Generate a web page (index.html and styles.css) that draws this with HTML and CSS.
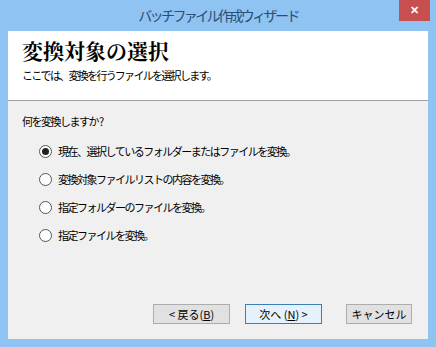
FILE: index.html
```html
<!DOCTYPE html>
<html lang="ja">
<head>
    <meta charset="UTF-8">
    <title>バッチファイル作成ウィザード</title>
    <link rel="stylesheet" href="styles.css">
</head>
<body>
    <div class="window">
        <div class="titlebar">
            <span class="title">バッチファイル作成ウィザード</span>
            <button class="close">&#x2715;</button>
        </div>
        <div class="client">
            <div class="header">
                <h1>変換対象の選択</h1>
                <p>ここでは、変換を行うファイルを選択します。</p>
            </div>
            <div class="body">
                <p class="question">何を変換しますか ?</p>
                <label class="option"><span class="radio checked"></span>現在、選択しているフォルダーまたはファイルを変換。</label>
                <label class="option"><span class="radio"></span>変換対象ファイルリストの内容を変換。</label>
                <label class="option"><span class="radio"></span>指定フォルダーのファイルを変換。</label>
                <label class="option"><span class="radio"></span>指定ファイルを変換。</label>
            </div>
            <div class="buttons">
                <button class="btn">&lt; 戻る(<u>B</u>)</button>
                <button class="btn default">次へ (<u>N</u>) &gt;</button>
                <button class="btn cancel">キャンセル</button>
            </div>
        </div>
    </div>
</body>
</html>
```

FILE: styles.css
```css
body {
    margin: 0;
    font-family: "Noto Sans CJK JP", sans-serif;
    font-size: 11px;
    letter-spacing: -1.5px;
    color: #000;
}

.window {
    width: 436px;
    height: 347px;
    box-sizing: border-box;
    background-color: #8ec3f2;
    padding: 0 8px 8px 8px;
    display: flex;
    flex-direction: column;
}

.titlebar {
    height: 31px;
    position: relative;
    display: flex;
    justify-content: center;
    align-items: center;
}

.title {
    font-size: 14px;
    letter-spacing: -2.6px;
    color: #2b4d71;
    margin-top: -1px;
}

.close {
    position: absolute;
    top: 0;
    right: -2px;
    width: 31px;
    height: 21px;
    border: none;
    background-color: #c74f50;
    color: white;
    font-size: 11px;
    font-weight: bold;
    letter-spacing: 0;
    padding: 0;
}

.client {
    flex: 1;
    background-color: #f0f0f0;
    display: flex;
    flex-direction: column;
}

.header {
    background-color: #fff;
    height: 70px;
    border-bottom: 1px solid #a0a0a0;
    padding: 4px 14px 0 14px;
    box-sizing: border-box;
}

.header h1 {
    margin: 0;
    font-family: "Noto Serif CJK JP", "Noto Sans CJK JP", serif;
    font-size: 21px;
    font-weight: bold;
    letter-spacing: 0;
    line-height: 30px;
}

.header p {
    margin: 2px 0 0 0;
    line-height: 16px;
    letter-spacing: -1.7px;
}

.body {
    flex: 1;
    padding: 12px 14px 0 14px;
}

.question {
    margin: 0 0 7px 0;
    line-height: 17px;
}

.option {
    display: flex;
    align-items: center;
    margin-left: 17px;
    height: 28px;
}

.radio {
    width: 13px;
    height: 13px;
    border: 1px solid #555;
    border-radius: 50%;
    background-color: #fff;
    margin-right: 6px;
    box-sizing: border-box;
    position: relative;
}

.radio.checked::after {
    content: "";
    position: absolute;
    left: 2px;
    top: 2px;
    width: 7px;
    height: 7px;
    border-radius: 50%;
    background-color: #222;
}

.buttons {
    display: flex;
    justify-content: flex-end;
    padding: 0 16px 15px 0;
    gap: 15px;
}

.btn {
    width: 77px;
    height: 20px;
    border: 1px solid #adadad;
    background-color: #e1e1e1;
    font-family: "Noto Sans CJK JP", sans-serif;
    font-size: 11px;
    letter-spacing: 0;
    padding: 0;
    line-height: 18px;
}

.btn.default {
    border-color: #3c7fb1;
    background-color: #e5f1fb;
}

.btn.cancel {
    width: 66px;
    margin-left: 9px;
}
```
